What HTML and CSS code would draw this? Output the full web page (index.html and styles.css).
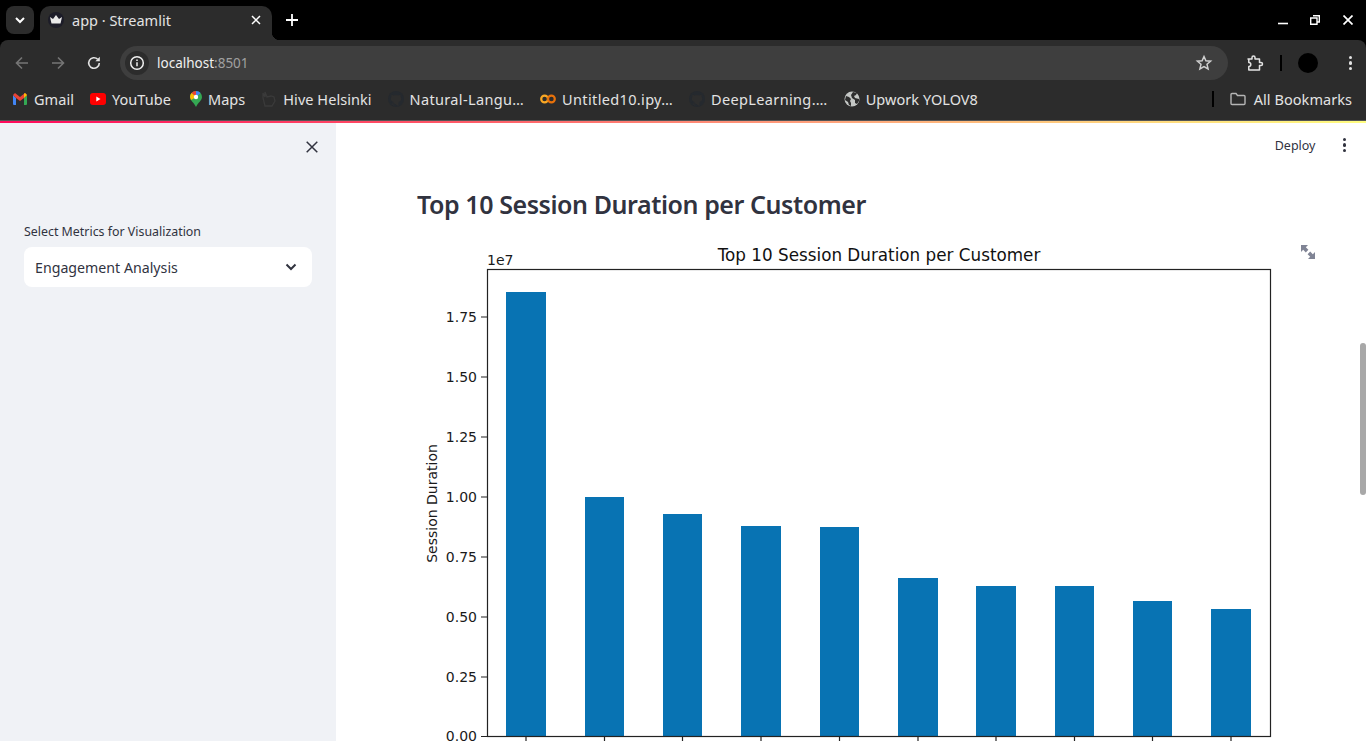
FILE: index.html
```html
<!DOCTYPE html>
<html lang="en">
<head>
    <meta charset="UTF-8">
    <meta name="viewport" content="width=device-width, initial-scale=1.0">
    <title>app · Streamlit</title>
    <link rel="stylesheet" href="styles.css">
</head>
<body>
    <header class="browser">
        <div class="tabstrip">
            <button class="tab-search">
                <svg width="12" height="12" viewBox="0 0 12 12"><path d="M2 4l4 4 4-4" fill="none" stroke="#fff" stroke-width="2"/></svg>
            </button>
            <div class="tab">
                <span class="favicon">
                    <svg width="16" height="16" viewBox="0 0 16 16"><path d="M2 5l3 2 3-4 3 4 3-2-1.500 6.500h-9z" fill="#e8e8e8"/></svg>
                </span>
                <span class="tab-title">app · Streamlit</span>
                <svg class="tab-close" width="10" height="10" viewBox="0 0 10 10"><path d="M1 1l8 8M9 1l-8 8" stroke="#fff" stroke-width="1.500"/></svg>
            </div>
            <svg class="new-tab" width="12" height="12" viewBox="0 0 12 12"><path d="M6 0v12M0 6h12" stroke="#fff" stroke-width="1.800"/></svg>
            <div class="window-controls">
                <svg width="10" height="10" viewBox="0 0 10 10"><path d="M0 8.500h10" stroke="#fff" stroke-width="1.600"/></svg>
                <svg width="10" height="10" viewBox="0 0 10 10"><path d="M3 .7h6.300V7H7M.7 3H7v6.300H.7z" fill="none" stroke="#fff" stroke-width="1.400"/></svg>
                <svg class="window-close" width="10" height="10" viewBox="0 0 10 10"><path d="M.5.500l9 9M9.500.500l-9 9" stroke="#fff" stroke-width="1.700"/></svg>
            </div>
        </div>

        <div class="toolbar">
            <svg class="nav-icon" width="16" height="16" viewBox="0 0 16 16"><path d="M14 8H2.500M8 2.500L2.500 8 8 13.500" fill="none" stroke="#757575" stroke-width="1.600"/></svg>
            <svg class="nav-icon" width="16" height="16" viewBox="0 0 16 16"><path d="M2 8h11.500M8 2.500L13.500 8 8 13.500" fill="none" stroke="#757575" stroke-width="1.600"/></svg>
            <svg class="nav-icon" width="16" height="16" viewBox="0 0 16 16"><path d="M13.300 8a5.300 5.300 0 1 1-1.600-3.800" fill="none" stroke="#e3e3e3" stroke-width="1.600"/><path d="M13.800 1.800v4.400H9.400z" fill="#e3e3e3"/></svg>
            <div class="omnibox">
                <span class="site-info">
                    <svg width="16" height="16" viewBox="0 0 16 16"><circle cx="8" cy="8" r="6.300" fill="none" stroke="#f0f0f0" stroke-width="1.500"/><path d="M8 7.200v4M8 4.600v1.400" stroke="#f0f0f0" stroke-width="1.500"/></svg>
                </span>
                <span class="url">localhost<span class="url-port">:8501</span></span>
                <svg class="star" width="18" height="18" viewBox="0 0 18 18"><path d="M9 2.500l1.900 4.300 4.700.4-3.600 3.100 1.100 4.600L9 12.500l-4.100 2.400L6 10.300 2.400 7.200l4.700-.4z" fill="none" stroke="#d0d0d0" stroke-width="1.500"/></svg>
            </div>
            <svg class="ext-icon" width="18" height="18" viewBox="0 0 18 18"><path d="M2 5h4V3.500a1.500 1.500 0 0 1 3 0V5h4.500v3.500H15a1.500 1.500 0 0 1 0 3h-1.500V16H2.800v-3.500a2 2 0 0 0 0-4V5z" fill="none" stroke="#e3e3e3" stroke-width="1.500" stroke-linejoin="round"/></svg>
            <span class="toolbar-sep"></span>
            <span class="avatar"></span>
            <span class="kebab kebab-light"><i></i><i></i><i></i></span>
        </div>

        <nav class="bookmarks">
            <a class="bookmark">
                <svg width="16" height="12" viewBox="-1 0 16 12"><path d="M0 2v9a1 1 0 0 0 1 1h2V5z" fill="#4285f4"/><path d="M14 2v9a1 1 0 0 1-1 1h-2V5z" fill="#34a853"/><path d="M0 2l3 3 4 3 4-3 3-3-2-2-5 4-5-4z" fill="#ea4335"/><path d="M11 5l3-3-2-2-1 .8z" fill="#fbbc04"/></svg>
                Gmail
            </a>
            <a class="bookmark">
                <svg width="16" height="12" viewBox="0 0 16 12"><rect width="16" height="12" rx="3" fill="#f00"/><path d="M6.300 3.500v5L10.500 6z" fill="#fff"/></svg>
                YouTube
            </a>
            <a class="bookmark bookmark-maps">
                <svg width="12" height="16" viewBox="0 0 12 16"><path d="M6 0a6 6 0 0 1 6 6c0 3.500-4 5.500-6 10C4 11.500 0 9.500 0 6a6 6 0 0 1 6-6z" fill="#34a853"/><path d="M6 0a6 6 0 0 1 4.500 2L6 6z" fill="#4285f4"/><path d="M1.500 2A6 6 0 0 1 6 0v6z" fill="#ea4335"/><path d="M0 6a6 6 0 0 1 1.500-4L6 6l-5 3z" fill="#fbbc04"/><circle cx="6" cy="6" r="2.200" fill="#fff"/></svg>
                Maps
            </a>
            <a class="bookmark">
                <svg width="16" height="16" viewBox="-1 0 16 16"><path d="M3 15L1 7V2l2 4V1l2 5 4-1 3 1 1 4-3 5z" fill="none" stroke="#3a3a3a" stroke-width="1.300"/></svg>
                Hive Helsinki
            </a>
            <a class="bookmark bookmark-long">
                <svg width="16" height="16" viewBox="0 0 16 16"><circle cx="8" cy="8" r="8" fill="#25292e"/><path d="M5.500 15v-2.500c-2 .4-2.500-.8-3-1.500M10.500 15v-3c0-1 .3-1.300.8-1.600 1.200-.3 1.900-1.200 1.900-3 0-.8-.3-1.400-.7-1.900.2-.6.100-1.200-.1-1.700-.7 0-1.300.4-1.800.7a7 7 0 0 0-5.200 0c-.5-.3-1.100-.7-1.800-.7-.2.500-.3 1.100-.1 1.700-.4.500-.7 1.100-.7 1.900 0 1.800.7 2.700 1.900 3 .5.300.8.600.8 1.600" fill="#2d2d2d"/></svg>
                Natural-Langu…
            </a>
            <a class="bookmark bookmark-long">
                <svg width="16" height="10" viewBox="0 0 16 10"><circle cx="4.600" cy="5" r="3.400" fill="none" stroke="#f9a825" stroke-width="2.200"/><circle cx="11.400" cy="5" r="3.400" fill="none" stroke="#e8710a" stroke-width="2.200"/></svg>
                Untitled10.ipy…
            </a>
            <a class="bookmark bookmark-long">
                <svg width="16" height="16" viewBox="0 0 16 16"><circle cx="8" cy="8" r="8" fill="#25292e"/><path d="M5.500 15v-2.500c-2 .4-2.500-.8-3-1.500M10.500 15v-3c0-1 .3-1.300.8-1.600 1.200-.3 1.900-1.200 1.900-3 0-.8-.3-1.400-.7-1.900.2-.6.100-1.200-.1-1.700-.7 0-1.300.4-1.800.7a7 7 0 0 0-5.200 0c-.5-.3-1.100-.7-1.800-.7-.2.500-.3 1.100-.1 1.700-.4.500-.7 1.100-.7 1.900 0 1.800.7 2.700 1.900 3 .5.300.8.600.8 1.600" fill="#2d2d2d"/></svg>
                DeepLearning.…
            </a>
            <a class="bookmark">
                <svg width="16" height="16" viewBox="0 0 16 16"><circle cx="8" cy="8" r="7.500" fill="#c4c7c5"/><path d="M2 5l3 1 2 2-1 2 1 2v3l-2-1-1-3-3-2zM9 1l4 1-1 2-2 1 1 2 4 1v2l-2 3-2-1V9L8 7l-1-3z" fill="#2d2d2d"/></svg>
                Upwork YOLOV8
            </a>
            <span class="bookmark-sep"></span>
            <a class="bookmark all-bookmarks">
                <svg width="16" height="14" viewBox="0 0 16 14"><path d="M1 2.500a1 1 0 0 1 1-1h4l1.500 2H14a1 1 0 0 1 1 1V11.500a1 1 0 0 1-1 1H2a1 1 0 0 1-1-1z" fill="none" stroke="#b5b5b5" stroke-width="1.400"/></svg>
                All Bookmarks
            </a>
        </nav>
    </header>

    <div class="decoration"></div>

    <div class="app">
        <aside class="sidebar">
            <div class="sidebar-top">
                <svg width="12" height="12" viewBox="0 0 12 12"><path d="M.7.700l10.600 10.600M11.300.700L.7 11.300" stroke="#31333f" stroke-width="1.500"/></svg>
            </div>
            <label class="select-label">Select Metrics for Visualization</label>
            <div class="select-box">
                <span>Engagement Analysis</span>
                <svg width="12" height="8" viewBox="0 0 12 8"><path d="M1.500 1.500L6 6l4.500-4.500" fill="none" stroke="#31333f" stroke-width="2"/></svg>
            </div>
        </aside>

        <main class="main">
            <div class="main-top">
                <span class="deploy">Deploy</span>
                <span class="kebab"><i></i><i></i><i></i></span>
            </div>
            <div class="content">
                <h2 class="page-title">Top 10 Session Duration per Customer</h2>
                <div class="chart-wrap">
                    <svg class="chart" width="943" height="501" viewBox="417 240 943 501">
                        <g fill="#0873b3">
                            <rect x="506" y="292" width="40" height="444"/>
                            <rect x="585" y="497" width="39" height="239"/>
                            <rect x="663" y="514" width="39" height="222"/>
                            <rect x="741" y="526" width="40" height="210"/>
                            <rect x="820" y="527" width="39" height="209"/>
                            <rect x="898" y="578" width="40" height="158"/>
                            <rect x="976" y="586" width="40" height="150"/>
                            <rect x="1055" y="586" width="39" height="150"/>
                            <rect x="1133" y="601" width="39" height="135"/>
                            <rect x="1211" y="609" width="40" height="127"/>
                        </g>
                        <rect x="487.500" y="269.500" width="783" height="467" fill="none" stroke="#222" stroke-width="1.200"/>
                        <path stroke="#222" stroke-width="1.200" d="M481 317h6M481 377h6M481 437h6M481 497h6M481 557h6M481 617h6M481 677h6M481 736.500h6M526 737v5M604.500 737v5M682.500 737v5M761 737v5M839.500 737v5M918 737v5M996 737v5M1074.500 737v5M1152.500 737v5M1231 737v5"/>
                        <g class="tick-labels" text-anchor="end">
                            <text x="477" y="322">1.75</text>
                            <text x="477" y="382">1.50</text>
                            <text x="477" y="442">1.25</text>
                            <text x="477" y="502">1.00</text>
                            <text x="477" y="562">0.75</text>
                            <text x="477" y="622">0.50</text>
                            <text x="477" y="682">0.25</text>
                            <text x="477" y="741">0.00</text>
                        </g>
                        <text class="tick-labels" x="487" y="265">1e7</text>
                        <text class="chart-title" x="879" y="261" text-anchor="middle">Top 10 Session Duration per Customer</text>
                        <text class="tick-labels" text-anchor="middle" transform="translate(437 503.500) rotate(-90)">Session Duration</text>
                        <path fill="#808495" d="M1301 245h7l-2.200 2.200 2.600 2.600-2.600 2.600-2.600-2.600-2.200 2.200zM1315 259h-7l2.200-2.200-2.600-2.600 2.600-2.600 2.600 2.600 2.200-2.200z"/>
                    </svg>
                </div>
            </div>
        </main>

        <div class="scrollbar"><div class="scroll-thumb"></div></div>
    </div>
</body>
</html>
```

FILE: styles.css
```css
* {
    box-sizing: border-box;
}

body {
    margin: 0;
    height: 741px;
    overflow: hidden;
    background-color: white;
    font-family: "Noto Sans", sans-serif;
}

/* browser chrome */
.browser {
    background: black;
    color: #e3e3e3;
}

.tabstrip {
    display: flex;
    align-items: flex-end;
    height: 40px;
    padding-left: 6px;
}

.tab-search {
    display: flex;
    align-items: center;
    justify-content: center;
    width: 28px;
    height: 28px;
    margin-bottom: 6px;
    padding: 0;
    border: 0;
    border-radius: 8px;
    background: #2c2c2c;
}

.tab {
    position: relative;
    display: flex;
    align-items: center;
    width: 232px;
    height: 34px;
    margin-left: 6px;
    padding: 0 11px 6px 8px;
    border-radius: 10px 10px 0 0;
    background: #2c2c2c;
}

.tab::after {
    content: "";
    position: absolute;
    right: -8px;
    bottom: 0;
    width: 8px;
    height: 8px;
    background: radial-gradient(circle at 100% 0, transparent 8px, #2c2c2c 8.5px);
}

.favicon {
    display: flex;
    align-items: center;
    justify-content: center;
    width: 16px;
    height: 16px;
    border-radius: 50%;
    background: #1c1c28;
}

.tab-title {
    flex: 1;
    margin-left: 8px;
    font-size: 14.500px;
    color: #e3e3e3;
}

.new-tab {
    margin: 0 0 14px 14px;
}

.window-controls {
    display: flex;
    gap: 22px;
    margin: 0 13px 15px auto;
}

.window-close {
    margin-left: 1px;
}

.toolbar {
    display: flex;
    align-items: center;
    height: 40px;
    padding: 6px 14px 0;
    border-radius: 8px 8px 0 0;
    background: #2c2c2c;
}

.nav-icon {
    margin-right: 20px;
}

.nav-icon:nth-child(3) {
    margin-right: 18px;
}

.omnibox {
    display: flex;
    align-items: center;
    flex: 1;
    height: 34px;
    padding: 0 15px 0 5px;
    border-radius: 17px;
    background: #3e3e3e;
}

.site-info {
    display: flex;
    align-items: center;
    justify-content: center;
    width: 24px;
    height: 24px;
    border-radius: 50%;
    background: #2c2c2c;
}

.url {
    flex: 1;
    margin-left: 8px;
    font-size: 13.500px;
    color: #f0f0f0;
}

.url-port {
    color: #a0a0a0;
}

.ext-icon {
    margin-left: 18px;
}

.toolbar-sep {
    width: 2px;
    height: 16px;
    margin-left: 16px;
    background: black;
}

.avatar {
    width: 20px;
    height: 20px;
    margin-left: 16px;
    border-radius: 50%;
    background: black;
}

.kebab {
    display: flex;
    flex-direction: column;
    gap: 2px;
}

.kebab i {
    width: 3.500px;
    height: 3.500px;
    border-radius: 50%;
    background: #31333f;
}

.kebab-light {
    margin-left: 31px;
}

.kebab-light i {
    background: #e3e3e3;
}

.bookmarks {
    display: flex;
    align-items: center;
    gap: 16px;
    height: 41px;
    padding: 0 14px 3px 12px;
    border-bottom: 1px solid #555;
    background: #2c2c2c;
}

.bookmark {
    display: flex;
    align-items: center;
    gap: 6px;
    font-size: 14.500px;
    letter-spacing: 0.050px;
    white-space: nowrap;
    color: #e3e3e3;
}

.bookmark-long {
    letter-spacing: 0.350px;
}

.bookmark-maps {
    margin-left: 3px;
}

.all-bookmarks svg {
    margin-right: 2px;
}

.bookmark-sep {
    width: 2px;
    height: 16px;
    margin-left: auto;
    background: black;
}

.decoration {
    height: 2px;
    background: linear-gradient(90deg, #ff0a5c, #ff4b64 28%, #ffa27c 60%, #fffd80);
}

/* streamlit app */
.app {
    display: flex;
    height: 618px;
    color: #31333f;
}

.sidebar {
    flex: none;
    width: 336px;
    padding: 0 24px;
    background: #f0f2f6;
}

.sidebar-top {
    display: flex;
    justify-content: flex-end;
    height: 101px;
    margin-right: -6px;
    padding: 18px 0 0;
}

.select-label {
    display: block;
    height: 23px;
    font-size: 12.400px;
    line-height: 16px;
}

.select-box {
    display: flex;
    align-items: center;
    justify-content: space-between;
    height: 40px;
    padding: 0 15px 0 11px;
    border-radius: 8px;
    background: white;
    font-size: 14.200px;
}

.main {
    flex: 1;
    overflow: hidden;
}

.main-top {
    display: flex;
    align-items: center;
    justify-content: flex-end;
    height: 44px;
    padding-right: 14px;
}

.deploy {
    margin-right: 27px;
    font-size: 12.500px;
}

.content {
    padding-left: 81px;
}

.page-title {
    height: 73px;
    margin: 0;
    padding-top: 19px;
    font-size: 25px;
    line-height: 36px;
    font-weight: 600;
    letter-spacing: -0.430px;
}

.chart {
    display: block;
}

.tick-labels {
    font-family: "DejaVu Sans", sans-serif;
    font-size: 14px;
    fill: #1a1a1a;
}

.chart-title {
    font-family: "DejaVu Sans", sans-serif;
    font-size: 16.800px;
    fill: #111;
}

.scrollbar {
    flex: none;
    width: 6px;
    padding-top: 220px;
}

.scroll-thumb {
    height: 152px;
    border-radius: 3px;
    background: #a8a8a8;
}
```
